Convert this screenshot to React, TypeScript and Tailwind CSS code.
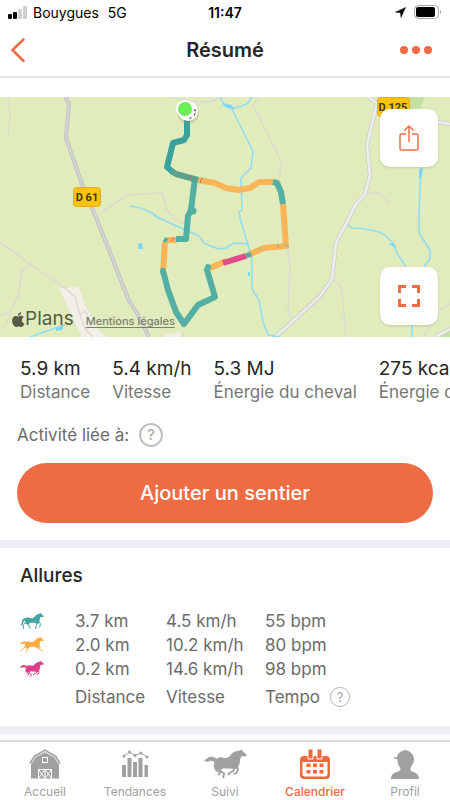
import type { ReactNode } from "react";
import clsx from "clsx";

type Gait = "walk" | "trot" | "gallop";

const STATS = [
  { value: "5.9 km", label: "Distance" },
  { value: "5.4 km/h", label: "Vitesse" },
  { value: "5.3 MJ", label: "Énergie du cheval" },
  { value: "275 kcal", label: "Énergie du cavalier" },
];

const GAITS: { gait: Gait; name: string; color: string; distance: string; speed: string; tempo: string }[] = [
  { gait: "walk", name: "Pas", color: "text-[#43a6a3]", distance: "3.7 km", speed: "4.5 km/h", tempo: "55 bpm" },
  { gait: "trot", name: "Trot", color: "text-[#fbac3c]", distance: "2.0 km", speed: "10.2 km/h", tempo: "80 bpm" },
  { gait: "gallop", name: "Galop", color: "text-[#e0408a]", distance: "0.2 km", speed: "14.6 km/h", tempo: "98 bpm" },
];

const TAILS: Record<Gait, string> = {
  walk: "M17 15C9 15 7 20 6 26C5 31 3 34 0 38C6 37 9 34 10 29C11 24 13 22 18 21Z",
  trot: "M18 15C11 12 8 14 5 16C3 18 2 18 0 17C1 21 5 22 8 20C11 18 13 18 17 20Z",
  gallop: "M21 15C16 12 11 11 7 13C4 15 3 17 0 17C2 21 7 21 10 19C13 18 14 19 19 21Z",
};

const BODIES: Record<Gait, string> = {
  walk: "M15 18C18 13 25 13 30 15C35 17 39 15 43 12C47 8 51 3 58 2L63 0L64 3L71 9C72 12 69 13 67 12L62 12C59 14 60 20 58 26C56 31 50 31 46 30C41 29 37 30 32 29C28 31 26 34 22 34C17 32 12 25 15 18Z",
  trot: "M15 18C18 13 25 13 30 15C35 17 39 15 43 12C47 8 51 3 58 2L63 0L64 3L71 9C72 12 69 13 67 12L62 12C59 14 60 20 58 26C56 31 50 31 46 30C41 29 37 30 32 29C28 31 26 34 22 34C17 32 12 25 15 18Z",
  gallop: "M18 20C20 14 26 12 31 13C36 15 40 14 43 11C46 7 50 3 57 2L64 0L65 3L71 8C72 11 70 12 68 11L63 11C60 13 61 19 59 25C57 31 52 33 47 32C42 31 38 32 33 31C29 32 27 35 23 33C18 30 16 25 18 20Z",
};

const LEGS: Record<Gait, string> = {
  walk: "M17 27L11 35L9 46L12 46M23 29L26 35L29 45L32 46M50 28L49 36L47 46L50 46M55 26L61 31L60 41L56 43",
  trot: "M18 27L11 34L4 39L3 43M22 28L25 34L19 39L21 45M51 27L57 34L66 42L69 43M55 26L61 30L55 37L52 36",
  gallop: "M22 28L20 34L27 38L24 43M26 29L28 36L34 40L32 46L34 47M51 29L49 36L42 39L41 43M55 28L57 33L54 39L50 41",
};

function Horse({ gait, className, label }: { gait: Gait; className: string; label?: string }) {
  return (
    <svg
      viewBox="0 0 72 48"
      className={className}
      fill="currentColor"
      role={label ? "img" : undefined}
      aria-label={label}
      aria-hidden={label ? undefined : true}
    >
      <path d={TAILS[gait]} />
      <path d={BODIES[gait]} />
      <path d={LEGS[gait]} fill="none" stroke="currentColor" strokeWidth="3" strokeLinejoin="round" />
      <path d="M47 27L58 25L55 32L48 33ZM16 24L27 28L24 35L17 32Z" />
    </svg>
  );
}

function StatusBar() {
  return (
    <div className="grid h-6 grid-cols-3 items-center pr-2 pl-2 text-[14px] text-black">
      <div className="flex items-center gap-[5px] whitespace-nowrap">
        <svg viewBox="0 0 20 13" className="h-[13px] w-5">
          <rect x="0" y="8" width="4" height="5" rx="1" />
          <rect x="5" y="6" width="4" height="7" rx="1" />
          <rect x="10" y="3" width="4" height="10" rx="1" fill="#cfcfcf" />
          <rect x="15" y="0" width="4" height="13" rx="1" fill="#cfcfcf" />
        </svg>
        <span>Bouygues</span>
        <span className="ml-1">5G</span>
      </div>
      <div className="text-center font-semibold">11:47</div>
      <div className="flex items-center justify-end gap-2">
        <svg viewBox="0 0 12 12" className="size-[11px]">
          <path d="M11.500 0.500L6.500 11.500L6 6.200L0.500 5.600Z" stroke="#000" strokeWidth="0.500" strokeLinejoin="round" />
        </svg>
        <svg viewBox="0 0 28 14" className="h-[14px] w-7">
          <rect x="0.500" y="0.500" width="24" height="13" rx="4" fill="none" stroke="#a3a3a3" />
          <rect x="2" y="2" width="19" height="10" rx="2" />
          <path d="M26 5C27.500 5.500 27.500 8.500 26 9Z" fill="#a3a3a3" />
        </svg>
      </div>
    </div>
  );
}

function Header() {
  return (
    <header className="flex h-[54px] items-center justify-between border-b-2 border-[#e2e2e4] px-[10px]">
      <button type="button" aria-label="Retour" className="w-10">
        <svg viewBox="0 0 16 24" className="h-6 w-4" fill="none" stroke="#ee6c43" strokeWidth="2.500" strokeLinecap="round">
          <path d="M13.500 1.500L2.500 12L13.500 23" strokeLinejoin="round" />
        </svg>
      </button>
      <h1 className="text-[20px] font-semibold text-[#262626]">Résumé</h1>
      <button type="button" aria-label="Plus d'options" className="flex w-10 justify-end gap-1 pr-2">
        <span className="size-2 shrink-0 rounded-full bg-[#ee6c43]" />
        <span className="size-2 shrink-0 rounded-full bg-[#ee6c43]" />
        <span className="size-2 shrink-0 rounded-full bg-[#ee6c43]" />
      </button>
    </header>
  );
}

function TrailMap() {
  return (
    <svg viewBox="0 0 450 240" preserveAspectRatio="xMidYMid slice" className="h-full w-full" role="img" aria-label="Tracé du parcours">
      <rect width="450" height="240" fill="#e0ecbb" />
      <path d="M405 0H425L421 9L426 18H405Z" fill="#c3e2a2" />
      <path d="M434 240L450 232V240Z" fill="#c3e2a2" />
      <path d="M59 192L78 189L87 212L99 234L108 240H82L66 206ZM165 238L182 235V240H165Z" fill="#f1efe7" />

      {/* tracks */}
      <g fill="none" stroke="#d9dcd2" strokeWidth="1.500" strokeLinejoin="round">
        <path d="M8 0L10 19L8 38" />
        <path d="M97 119L115 106L129 98L162 96L168 115L184 127" />
        <path d="M170 0L190 4L210 5L222 0" />
        <path d="M253 8L260 0M253 8L282 66L279 82" />
        <path d="M365 97L378 95L390 107" />
        <path d="M332 182L341 189L343 205L346 240" />
        <path d="M287 149L290 167L288 213L292 224" />
        <path d="M0 145L31 168L65 191L75 200L80 218L85 232L93 240" />
        <path d="M31 168L22 172L19 195L10 217L3 233M0 218L10 217" />
        <path d="M80 218L85 214L92 228L86 232M182 235V240" />
        <path d="M438 214L450 207M423 240L430 230" />
      </g>

      {/* roads */}
      <g fill="none" strokeLinejoin="round">
        <g stroke="#c3c3c3" strokeWidth="4">
          <path d="M65 0L69 6L66 41L84 93L97 123L111 158L129 204L137 216L149 240" />
          <path d="M368 0L377 6L367 48L370 78L365 97L356 107L336 146L332 182L320 199L293 224L275 240" />
          <path d="M437 25L450 27M435 240L450 232" />
        </g>
        <g stroke="#d4d4d6" strokeWidth="2">
          <path d="M65 0L69 6L66 41L84 93L97 123L111 158L129 204L137 216L149 240" />
        </g>
        <g stroke="#ececec" strokeWidth="3">
          <path d="M368 0L377 6L367 48L370 78L365 97L356 107L336 146L332 182L320 199L293 224L275 240" />
          <path d="M437 25L450 27M435 240L450 232" />
        </g>
      </g>

      {/* streams and ponds */}
      <g fill="none" stroke="#8fdcf2" strokeWidth="1.500" strokeLinejoin="round">
        <path d="M130 109Q148 111 162 123M153 118L172 127L199 139L204 146L218 152L226 151L234 146L248 147" />
        <path d="M220 0L224 8L232 12L253 54L251 71L241 81L242 113L239 115L241 125L248 147L252 163L252 192L259 203L263 225L268 238L280 240" />
        <path d="M232 12L247 7L252 0" />
        <path d="M421 70L419 118V136L430 153L430 162L424 170" />
        <path d="M348 128L352 131Q376 132 385 138L392 145L398 158L406 170" />
        <path d="M412 225V240M30 240L50 233L65 228" />
      </g>
      <path d="M223 6L232 8L234 12L225 10ZM138 147L142 146L143 152L138 152ZM419 72L423 71L422 79L419 83ZM388 147L394 146L397 152L393 149ZM248 175H250V179H248ZM56 231L64 228L62 233L56 234Z" fill="#7fd5f3" />

      {/* recorded trail, coloured by gait */}
      <g fill="none" strokeWidth="6" strokeLinejoin="round">
        <g stroke="#fab45a">
          <path d="M198 83L215 86L226 91L238 93L250 91L259 85H274" />
          <path d="M283 107L286 149L264 151L248 158M208 172L226 164M163 176L165 145M167 143H177" />
        </g>
        <g stroke="#53aea3">
          <path d="M195 81L191 113L188 119L186 142H176" />
          <path d="M273 85L277 86L281 95L283 107" />
          <path d="M208 170L207 173L215 200L198 208L184 227L176 215L168 193L163 174" strokeLinecap="round" />
          <path d="M246 159L251 157M164 142L167 144" strokeWidth="5" />
        </g>
        <path d="M187 20V38L184 43L173 46L167 70L174 76" stroke="#3ba19c" />
        <path d="M171 74L176 77L198 83" stroke="#5ba28d" />
        <path d="M223 166L246 159" stroke="#e14b89" />
        <path d="M191 84V78M200 86L202 81M172 144L174 140" stroke="#d45a79" strokeWidth="1" />
        <path d="M260 154V150M278 151V147M284 147L289 150" stroke="#7fb99a" strokeWidth="1" />
      </g>
      <circle cx="193" cy="114" r="3.500" fill="#53aea3" />
      <circle cx="188" cy="16" r="11" fill="#7c8866" opacity="0.250" />
      <circle cx="188" cy="14" r="10" fill="#fff" />
      <path d="M194 12L196 13L195 15ZM194 17L196 16L194 19ZM189 21L192 20L190 22Z" fill="#222" />
      <circle cx="185" cy="12" r="9" fill="#fff" />
      <circle cx="185" cy="12" r="7" fill="#69ef58" />

      <g stroke="#e9aa23" fill="#ffc20e" strokeWidth="1">
        <rect x="73.500" y="90.500" width="27" height="19" rx="3" />
        <rect x="377.500" y="0.500" width="32" height="19" rx="3" />
      </g>
      <g className="font-['Roboto',sans-serif] text-[11px] font-bold" fill="#40381b" textAnchor="middle">
        <text x="87" y="104">D 61</text>
        <text x="393" y="14">D 125</text>
      </g>
    </svg>
  );
}

function MapButton({ label, children }: { label: string; children: ReactNode }) {
  return (
    <button
      type="button"
      aria-label={label}
      className="flex size-[58px] items-center justify-center rounded-[10px] bg-white shadow-sm"
    >
      {children}
    </button>
  );
}

function MapPanel() {
  return (
    <section className="relative mt-[19px] h-60 overflow-hidden">
      <TrailMap />
      <div className="absolute inset-y-3 right-3 flex flex-col justify-between">
        <MapButton label="Partager">
          <svg viewBox="0 0 20 26" className="h-[26px] w-5" fill="none" stroke="#f0704a" strokeWidth="1.500">
            <path d="M7 9H2.500Q1 9 1 10.500V23.500Q1 25 2.500 25H17.500Q19 25 19 23.500V10.500Q19 9 17.500 9H13M10 17V1.500M5.500 5.500L10 1L14.500 5.500" />
          </svg>
        </MapButton>
        <MapButton label="Plein écran">
          <svg viewBox="0 0 22 22" className="size-[22px]" fill="none" stroke="#ee6c43" strokeWidth="3">
            <path d="M1.500 8V1.500H8M14 1.500H20.500V8M20.500 14V20.500H14M8 20.500H1.500V14" />
          </svg>
        </MapButton>
      </div>
      <div className="absolute bottom-[6px] left-3 flex items-end gap-3 text-[#555b45]">
        <span className="flex items-center text-[19px] leading-6">
          <svg viewBox="0 0 24 28" className="h-[15px] w-[13px]" fill="currentColor" aria-hidden="true">
            <path d="M17 0C17 4 14 7 11 7C11 3 14 1 17 0ZM22 10C16 13 18 20 23 22C21 26 19 28 17 28C15 28 14 27 12 27C10 27 9 28 7 28C3 27 0 21 0 16C0 8 7 5 12 9C15 6 20 7 22 10Z" />
          </svg>
          Plans
        </span>
        <a href="#legal" className="text-[11px] leading-5 font-medium text-[#7d8073] underline underline-offset-2">
          Mentions légales
        </a>
      </div>
    </section>
  );
}

function HelpButton({ label, className }: { label: string; className: string }) {
  return (
    <button
      type="button"
      aria-label={label}
      className={clsx("flex shrink-0 items-center justify-center rounded-full text-[#a3a3a3]", className)}
    >
      ?
    </button>
  );
}

function Stats() {
  return (
    <section className="pt-5 pb-[17px]">
      <dl className="flex gap-[22px] overflow-hidden pl-5 whitespace-nowrap">
        {STATS.map((stat) => (
          <div key={stat.label} className="flex shrink-0 flex-col-reverse">
            <dt className="text-[17px] leading-[22px] text-[#767676]">{stat.label}</dt>
            <dd className="text-[19px] leading-6 text-[#262626]">{stat.value}</dd>
          </div>
        ))}
      </dl>
      <div className="mt-5 flex items-center gap-[10px] px-[17px] text-[17px] leading-6 text-[#6b6b6b]">
        Activité liée à:
        <HelpButton label="Aide sur l'activité liée" className="size-6 border-2 border-[#c0c0c0] text-[15px]" />
      </div>
      <div className="mt-4 px-[17px]">
        <button type="button" className="h-[60px] w-full rounded-full bg-[#ee6c43] text-[20px] font-medium text-white">
          Ajouter un sentier
        </button>
      </div>
    </section>
  );
}

function Gaits() {
  return (
    <section className="border-y-8 border-[#eeedf3] px-5 pt-[14px] pb-[17px]">
      <h2 className="text-[19px] leading-7 font-medium text-[#262626]">Allures</h2>
      <table className="mt-[19px] text-left text-[17px] leading-6 whitespace-nowrap text-[#6b6b6b]">
        <tbody>
          {GAITS.map((row) => (
            <tr key={row.gait}>
              <th scope="row" className="w-[55px] p-0">
                <Horse gait={row.gait} label={row.name} className={clsx("h-4 w-6", row.color)} />
              </th>
              <td className="w-[91px] p-0">{row.distance}</td>
              <td className="w-[99px] p-0">{row.speed}</td>
              <td className="p-0">{row.tempo}</td>
            </tr>
          ))}
        </tbody>
        <tfoot>
          <tr>
            <td />
            <td className="px-0 pt-1 pb-0">Distance</td>
            <td className="px-0 pt-1 pb-0">Vitesse</td>
            <td className="px-0 pt-1 pb-0">
              <span className="flex items-center gap-[10px]">
                Tempo
                <HelpButton label="Aide sur le tempo" className="size-5 border border-[#b0b0b0] text-[13px]" />
              </span>
            </td>
          </tr>
        </tfoot>
      </table>
    </section>
  );
}

function BarnIcon() {
  return (
    <svg viewBox="0 0 32 30" className="h-[30px] w-8" fill="currentColor">
      <path d="M16 2.500L26 7.500L30 14.500V29.500H2V14.500L6 7.500Z" />
      <path d="M1 14.500L5.500 7L16 1L26.500 7L31 14.500" fill="none" stroke="currentColor" strokeWidth="1.500" />
      <path d="M2.500 14.500L6.500 8.200L16 3L25.500 8.200L29.500 14.500" fill="none" stroke="#fff" strokeWidth="0.700" />
      <g fill="none" stroke="#fff" strokeWidth="1">
        <rect x="13.500" y="8.500" width="5" height="5" />
        <path d="M9.500 29.500V20.500H22.500V29.500M16 20.500V29.500M9.500 20.500L16 29.500L22.500 20.500M9.500 29.500L16 20.500L22.500 29.500" />
      </g>
    </svg>
  );
}

function TrendsIcon() {
  return (
    <svg viewBox="0 0 28 30" className="h-[30px] w-7" fill="currentColor">
      <path d="M1 16H5V28H1ZM6.500 9H10.500V28H6.500ZM12 13H16V28H12ZM17.500 9H21.500V28H17.500ZM23.500 16H27V28H23.500Z" />
      <path d="M3 7L8.500 3L14 6.500L20 4L26 8" fill="none" stroke="currentColor" />
      <circle cx="3" cy="7" r="1.500" />
      <circle cx="8.500" cy="3" r="1.500" />
      <circle cx="14" cy="6.500" r="1.500" />
      <circle cx="20" cy="4" r="1.500" />
      <circle cx="26" cy="8" r="1.500" />
    </svg>
  );
}

function CalendarIcon() {
  return (
    <svg viewBox="0 0 32 30" className="h-[30px] w-8" fill="currentColor">
      <path d="M5 7H27Q31 7 31 11V26Q31 30 27 30H5Q1 30 1 26V11Q1 7 5 7ZM3.500 13V25Q3.500 27.500 6 27.500H26Q28.500 27.500 28.500 25V13Z" fillRule="evenodd" />
      <path d="M9 0H14V10H9ZM18 0H23V10H18Z" stroke="#fff" />
      <path d="M7.500 14.500H11.500V18H7.500ZM14 14.500H18V18H14ZM20.500 14.500H24.500V18H20.500ZM7.500 21H11.500V24.500H7.500ZM14 21H18V24.500H14ZM20.500 21H24.500V24.500H20.500Z" />
    </svg>
  );
}

function RiderIcon() {
  return (
    <svg viewBox="0 0 30 30" className="size-[30px]" fill="currentColor">
      <path d="M7 8.500C7.500 4 11 2 14 1.500Q15 0 17 1.500C21 2.500 24 6 24 10.500C24 14 22.500 15 21.500 17C20 20 20 21.500 22 22.500C26 24 29 25 29 30H1C1 25 4 24 8 22.500C10.500 21.500 11 20.500 10 18.500C8 16 7.500 13 7.500 10.500Q5 9 3.500 9.500C4 8 5.500 7.500 7 8.500Z" />
    </svg>
  );
}

const TABS: { label: string; href: string; icon: ReactNode; active?: boolean }[] = [
  { label: "Accueil", href: "#accueil", icon: <BarnIcon /> },
  { label: "Tendances", href: "#tendances", icon: <TrendsIcon /> },
  { label: "Suivi", href: "#suivi", icon: <Horse gait="gallop" className="h-[30px] w-[43px]" /> },
  { label: "Calendrier", href: "#calendrier", icon: <CalendarIcon />, active: true },
  { label: "Profil", href: "#profil", icon: <RiderIcon /> },
];

function TabBar() {
  return (
    <nav className="mt-auto grid grid-cols-5 border-t-2 border-[#d9d9d9] bg-white pt-[7px]">
      {TABS.map((tab) => (
        <a
          key={tab.label}
          href={tab.href}
          aria-current={tab.active ? "page" : undefined}
          className={clsx(
            "flex flex-col items-center gap-1 text-[12px] leading-[17px]",
            tab.active ? "font-medium text-[#f0693e]" : "text-[#a0a0a0]",
          )}
        >
          {tab.icon}
          {tab.label}
        </a>
      ))}
    </nav>
  );
}

export default function App() {
  return (
    <div className="flex min-h-screen flex-col bg-[#fafafa] font-['Inter','Liberation_Sans',sans-serif]">
      <main className="bg-white">
        <StatusBar />
        <Header />
        <MapPanel />
        <Stats />
        <Gaits />
      </main>
      <TabBar />
    </div>
  );
}
